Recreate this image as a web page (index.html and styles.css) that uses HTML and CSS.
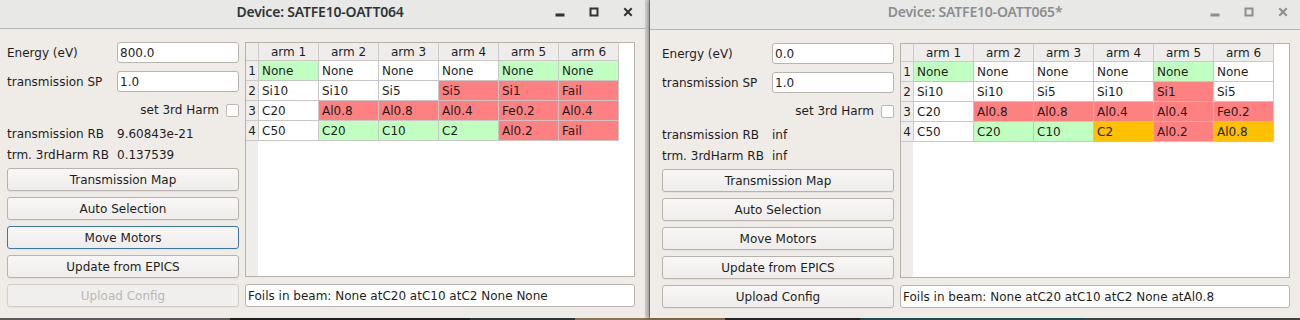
FILE: index.html
```html
<!DOCTYPE html>
<html>
<head>
<meta charset="utf-8">
<link rel="stylesheet" href="styles.css">
</head>
<body>
<div class="desktop">
  <div class="strip">
    <span class="s1"></span><span class="s2"></span><span class="s3"></span><span class="s4"></span><span class="s5"></span><span class="s6"></span><span class="s7"></span>
  </div>
</div>
<div class="backwin"></div>

<section class="win win-left">
  <header class="titlebar">
    <span></span>
    <span class="title">Device: SATFE10-OATT064</span>
    <div class="controls">
      <span class="ctl"><svg width="10" height="10" viewBox="0 0 10 10"><rect x="1" y="7" width="8" height="2"/></svg></span>
      <span class="ctl"><svg width="10" height="10" viewBox="0 0 10 10"><rect x="1.5" y="1.5" width="7" height="7" fill="none" stroke-width="2"/></svg></span>
      <span class="ctl"><svg width="10" height="10" viewBox="0 0 10 10"><path d="M1.3 1.3 L8.7 8.7 M8.7 1.3 L1.3 8.7" stroke-width="2" fill="none"/></svg></span>
    </div>
  </header>
  <div class="content">
    <div class="side">
      <div class="row"><span class="lbl">Energy (eV)</span><div class="input">800.0</div></div>
      <div class="row"><span class="lbl">transmission SP</span><div class="input">1.0</div></div>
      <div class="checkrow"><span>set 3rd Harm</span><span class="check"></span></div>
      <div class="readrow first"><span class="lbl">transmission RB</span><span>9.60843e-21</span></div>
      <div class="readrow"><span class="lbl">trm. 3rdHarm RB</span><span>0.137539</span></div>
      <div class="buttons">
        <div class="btn">Transmission Map</div>
        <div class="btn">Auto Selection</div>
        <div class="btn focus">Move Motors</div>
        <div class="btn">Update from EPICS</div>
        <div class="btn disabled">Upload Config</div>
      </div>
    </div>
    <div class="main">
      <div class="tframe">
        <table class="grid">
          <thead>
            <tr><th class="vh"></th><th>arm 1</th><th>arm 2</th><th>arm 3</th><th>arm 4</th><th>arm 5</th><th>arm 6</th></tr>
          </thead>
          <tbody>
            <tr><th class="vh">1</th><td class="g">None</td><td>None</td><td>None</td><td>None</td><td class="g">None</td><td class="g">None</td></tr>
            <tr><th class="vh">2</th><td>Si10</td><td>Si10</td><td>Si5</td><td class="r">Si5</td><td class="r">Si1</td><td class="r">Fail</td></tr>
            <tr><th class="vh">3</th><td>C20</td><td class="r">Al0.8</td><td class="r">Al0.8</td><td class="r">Al0.4</td><td class="r">Fe0.2</td><td class="r">Al0.4</td></tr>
            <tr><th class="vh">4</th><td>C50</td><td class="g">C20</td><td class="g">C10</td><td class="g">C2</td><td class="r">Al0.2</td><td class="r">Fail</td></tr>
          </tbody>
        </table>
      </div>
      <div class="status">Foils in beam: None atC20 atC10 atC2 None None</div>
    </div>
  </div>
</section>

<section class="win win-right">
  <header class="titlebar">
    <span></span>
    <span class="title">Device: SATFE10-OATT065*</span>
    <div class="controls">
      <span class="ctl"><svg width="10" height="10" viewBox="0 0 10 10"><rect x="1" y="7" width="8" height="2"/></svg></span>
      <span class="ctl"><svg width="10" height="10" viewBox="0 0 10 10"><rect x="1.5" y="1.5" width="7" height="7" fill="none" stroke-width="2"/></svg></span>
      <span class="ctl"><svg width="10" height="10" viewBox="0 0 10 10"><path d="M1.3 1.3 L8.7 8.7 M8.7 1.3 L1.3 8.7" stroke-width="2" fill="none"/></svg></span>
    </div>
  </header>
  <div class="content">
    <div class="side">
      <div class="row"><span class="lbl">Energy (eV)</span><div class="input">0.0</div></div>
      <div class="row"><span class="lbl">transmission SP</span><div class="input">1.0</div></div>
      <div class="checkrow"><span>set 3rd Harm</span><span class="check"></span></div>
      <div class="readrow first"><span class="lbl">transmission RB</span><span>inf</span></div>
      <div class="readrow"><span class="lbl">trm. 3rdHarm RB</span><span>inf</span></div>
      <div class="buttons">
        <div class="btn">Transmission Map</div>
        <div class="btn">Auto Selection</div>
        <div class="btn">Move Motors</div>
        <div class="btn">Update from EPICS</div>
        <div class="btn">Upload Config</div>
      </div>
    </div>
    <div class="main">
      <div class="tframe">
        <table class="grid">
          <thead>
            <tr><th class="vh"></th><th>arm 1</th><th>arm 2</th><th>arm 3</th><th>arm 4</th><th>arm 5</th><th>arm 6</th></tr>
          </thead>
          <tbody>
            <tr><th class="vh">1</th><td class="g">None</td><td>None</td><td>None</td><td>None</td><td class="g">None</td><td>None</td></tr>
            <tr><th class="vh">2</th><td>Si10</td><td>Si10</td><td>Si5</td><td>Si10</td><td class="r">Si1</td><td>Si5</td></tr>
            <tr><th class="vh">3</th><td>C20</td><td class="r">Al0.8</td><td class="r">Al0.8</td><td class="r">Al0.4</td><td class="r">Al0.4</td><td class="r">Fe0.2</td></tr>
            <tr><th class="vh">4</th><td>C50</td><td class="g">C20</td><td class="g">C10</td><td class="o">C2</td><td class="r">Al0.2</td><td class="o">Al0.8</td></tr>
          </tbody>
        </table>
      </div>
      <div class="status">Foils in beam: None atC20 atC10 atC2 None atAl0.8</div>
    </div>
  </div>
</section>
</body>
</html>
```
FILE: styles.css
```css
html, body {
  margin: 0;
  padding: 0;
}
body {
  width: 1300px;
  height: 320px;
  overflow: hidden;
  position: relative;
  background: #3a3a3a;
  font-family: "DejaVu Sans", sans-serif;
  font-size: 12px;
  color: #1e1e1e;
}

.desktop {
  position: absolute;
  left: 0;
  top: 0;
  width: 1300px;
  height: 320px;
  display: flex;
  flex-direction: column;
  justify-content: flex-end;
}
.strip {
  display: flex;
  height: 4px;
}
.strip span { display: block; height: 4px; }
.s1 { width: 230px; background: #5a5a5a; }
.s2 { width: 240px; background: #1f1f1f; }
.s3 { width: 105px; background: #2c3440; }
.s4 { width: 150px; background: #8c7350; }
.s5 { width: 135px; background: #2a2a2a; }
.s6 { width: 225px; background: #24535c; }
.s7 { flex: 1; background: #4a4a48; }

.backwin {
  position: absolute;
  left: 640px;
  top: 0;
  width: 9px;
  height: 318px;
  background: #d2d2d0;
  border-right: 1px solid #8e8e8c;
}

.win {
  position: absolute;
  top: 0;
  width: 650px;
  height: 318px;
  background: #efebe7;
  display: flex;
  flex-direction: column;
}
.win-left { left: -5px; }
.win-right {
  left: 650px;
  box-shadow: -2px 0 4px rgba(0, 0, 0, 0.35);
}

.titlebar {
  box-sizing: border-box;
  height: 29px;
  padding-bottom: 5px;
  background: #e8e8e7;
  border-bottom: 1px solid #b4b4b2;
  display: grid;
  grid-template-columns: 1fr auto 1fr;
  align-items: center;
}
.win-right .titlebar { height: 30px; padding-bottom: 6px; }
.title {
  font-family: "Noto Sans", sans-serif;
  font-size: 14px;
  font-weight: 600;
  color: #2e3436;
  letter-spacing: -0.2px;
}
.win-right .title { color: #8b8e8f; }
.controls {
  justify-self: end;
  display: flex;
}
.ctl {
  width: 34px;
  display: flex;
  justify-content: center;
  align-items: center;
}
.ctl svg { fill: #2e3436; stroke: #2e3436; }
.win-right .ctl svg { fill: #8b8e8f; stroke: #8b8e8f; }
.ctl svg rect[fill="none"], .ctl svg path { fill: none; }

.content {
  padding: 13px 10px 0 12px;
  display: grid;
  grid-template-columns: 232px 390px;
  column-gap: 6px;
}

.side {
  display: flex;
  flex-direction: column;
}
.row {
  display: flex;
  align-items: center;
  height: 21px;
}
.row + .row { margin-top: 8px; }
.lbl { width: 110px; flex: none; }
.input {
  flex: 1;
  box-sizing: border-box;
  height: 21px;
  background: #fff;
  border: 1px solid #b8b3ad;
  border-radius: 3px;
  padding-left: 2px;
  display: flex;
  align-items: center;
}
.checkrow {
  margin-top: 11px;
  height: 14px;
  display: flex;
  justify-content: flex-end;
  align-items: center;
  gap: 7px;
}
.check {
  width: 13px;
  height: 13px;
  box-sizing: border-box;
  background: #fff;
  border: 1px solid #bdb8b2;
  border-radius: 2px;
}
.readrow {
  display: flex;
  align-items: center;
  height: 16px;
  margin-top: 5px;
}
.readrow.first { margin-top: 9px; }

.buttons {
  margin-top: 5px;
  display: flex;
  flex-direction: column;
  gap: 6px;
}
.btn {
  box-sizing: border-box;
  height: 23px;
  border: 1px solid #b7b2ac;
  border-radius: 3px;
  background: linear-gradient(#f8f7f6, #efedeb);
  display: flex;
  justify-content: center;
  align-items: center;
  box-shadow: 0 1px 0 rgba(0, 0, 0, 0.04);
}
.btn.focus { border-color: #3f76a8; }
.btn.disabled {
  color: #bcb7b1;
  border-color: #d2cdc7;
  background: #f1efed;
}

.main {
  display: flex;
  flex-direction: column;
  gap: 7px;
}
.tframe {
  box-sizing: border-box;
  height: 235px;
  border: 1px solid #b6b1ab;
  background: linear-gradient(to right, #efedeb 0 12px, #fff 12px);
  overflow: hidden;
}
.grid {
  border-collapse: separate;
  border-spacing: 0;
  table-layout: fixed;
}
.grid th, .grid td {
  padding: 0;
  font-weight: normal;
  white-space: nowrap;
  overflow: hidden;
}
.grid thead th {
  height: 17px;
  width: 59px;
  background: #efedeb;
  border-right: 1px solid #cdc9c4;
  border-bottom: 1px solid #cdc9c4;
  text-align: center;
}
.grid th.vh {
  width: 12px;
  background: #efedeb;
  border-right: 1px solid #cdc9c4;
  text-align: center;
}
.grid tbody th.vh {
  border-bottom: 1px solid #cdc9c4;
}
.grid td {
  width: 56px;
  height: 19px;
  padding-left: 3px;
  background: #fff;
  border-right: 1px solid #c6c6c6;
  border-bottom: 1px solid #c6c6c6;
}
.grid td.g { background: #c0ffc0; }
.grid td.r { background: #ff8080; }
.grid td.o { background: #ffc000; }

.status {
  box-sizing: border-box;
  height: 23px;
  background: #fff;
  border: 1px solid #b8b3ad;
  border-radius: 3px;
  padding-left: 2px;
  display: flex;
  align-items: center;
}
```
